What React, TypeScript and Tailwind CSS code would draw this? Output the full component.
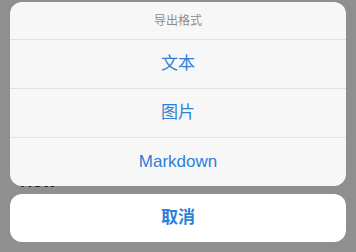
import React from 'react';

const font = '"Liberation Sans", "Noto Sans CJK SC", sans-serif';

const options = ['文本', '图片', 'Markdown'];

export default function App() {
  return (
    <div
      className="w-[356px] h-[252px] bg-[#8f8f8f] px-[10px] pt-[2px] overflow-hidden"
      style={{ fontFamily: font }}
    >
      <div className="flex flex-col bg-[#f7f7f7] rounded-[12px] overflow-hidden">
        <div className="h-[37px] flex items-center justify-center text-[12px] text-[#8c8c8c]">
          导出格式
        </div>
        {options.map((label) => (
          <div
            key={label}
            className="h-[49px] flex items-center justify-center border-t border-[#e2e2e2] text-[17px] text-[#2f7ed8]"
          >
            {label}
          </div>
        ))}
      </div>
      <div className="h-[8px] overflow-hidden pl-[10px]">
        <div className="-mt-[13px] text-[17px] font-bold leading-[17px] text-[#1a1a1a]">How</div>
      </div>
      <div className="h-[48px] flex items-center justify-center bg-white rounded-[12px] text-[17px] font-bold text-[#2f7ed8]">
        取消
      </div>
    </div>
  );
}
